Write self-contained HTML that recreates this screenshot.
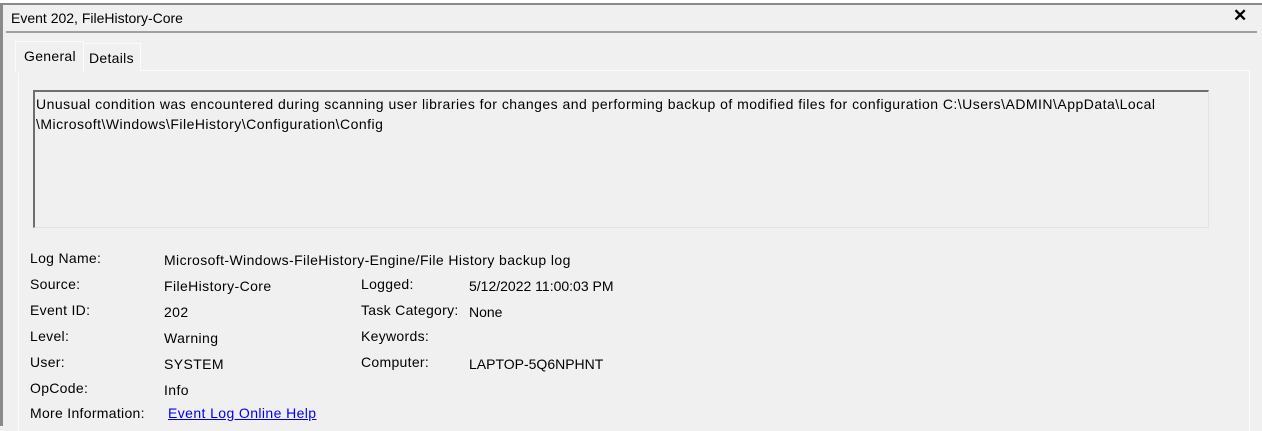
<!DOCTYPE html>
<html><head><style>
body{margin:0;width:1262px;height:426px;overflow:hidden;background:#f0f0f0;font-family:"Liberation Sans",sans-serif;font-size:14px;color:#000;position:relative}
.a{position:absolute;white-space:nowrap}
</style></head><body>
<div class="a" style="left:0;top:0;width:1262px;height:4px;background:#fff"></div>
<div class="a" style="left:0;top:3px;width:1262px;height:2px;background:#8a8a8a"></div>
<div class="a" style="left:0;top:3px;width:3px;height:423px;background:#8a8a8a"></div>
<div class="a" style="left:11px;top:10px;font-size:14px">Event 202, FileHistory-Core</div>
<div class="a" style="left:1233px;top:6px;font-size:17px;font-weight:bold">✕</div>
<div class="a" style="left:6px;top:31px;width:1251px;height:2px;background:#a0a0a0"></div>
<div class="a" style="left:18px;top:70px;width:1230px;height:360px;border:1px solid #fbfbfb;border-bottom:none;background:#f0f0f0"></div>
<div class="a" style="left:83px;top:43px;width:56px;height:27px;border:1px solid #fbfbfb;border-bottom:none;background:#f0f0f0"></div>
<div class="a" style="left:15px;top:41px;width:67px;height:31px;border:1px solid #fbfbfb;border-bottom:none;background:#f0f0f0"></div>
<div class="a" style="left:24px;top:48px;letter-spacing:0.3px">General</div>
<div class="a" style="left:89px;top:50px;letter-spacing:0.3px">Details</div>
<div class="a" style="left:33px;top:90px;width:1173px;height:135px;border-top:2px solid #6e6e6e;border-left:2px solid #6e6e6e;border-right:1px solid #e3e3e3;border-bottom:1px solid #e3e3e3;background:#f0f0f0"></div>
<div class="a" style="left:36px;top:94px;line-height:20px;letter-spacing:0.48px">Unusual condition was encountered during scanning user libraries for changes and performing backup of modified files for configuration C:\Users\ADMIN\AppData\Local<br>\Microsoft\Windows\FileHistory\Configuration\Config</div>
<div class="a" style="left:30px;top:245px;line-height:26px;letter-spacing:0.3px">Log Name:<br>Source:<br>Event ID:<br>Level:<br>User:<br>OpCode:</div>
<div class="a" style="left:30px;top:405px;letter-spacing:0.3px">More Information:</div>
<div class="a" style="left:164px;top:247px;line-height:26px;letter-spacing:0.4px">Microsoft-Windows-FileHistory-Engine/File History backup log<br>FileHistory-Core<br>202<br>Warning<br>SYSTEM<br>Info</div>
<div class="a" style="left:168px;top:405px;color:#0000ee;text-decoration:underline;letter-spacing:0.4px">Event Log Online Help</div>
<div class="a" style="left:361px;top:271px;line-height:26px;letter-spacing:0.3px">Logged:<br>Task Category:<br>Keywords:<br>Computer:</div>
<div class="a" style="left:469px;top:273px;line-height:26px;letter-spacing:0px">5/12/2022 11:00:03 PM<br>None<br><br>LAPTOP-5Q6NPHNT</div>
</body></html>
